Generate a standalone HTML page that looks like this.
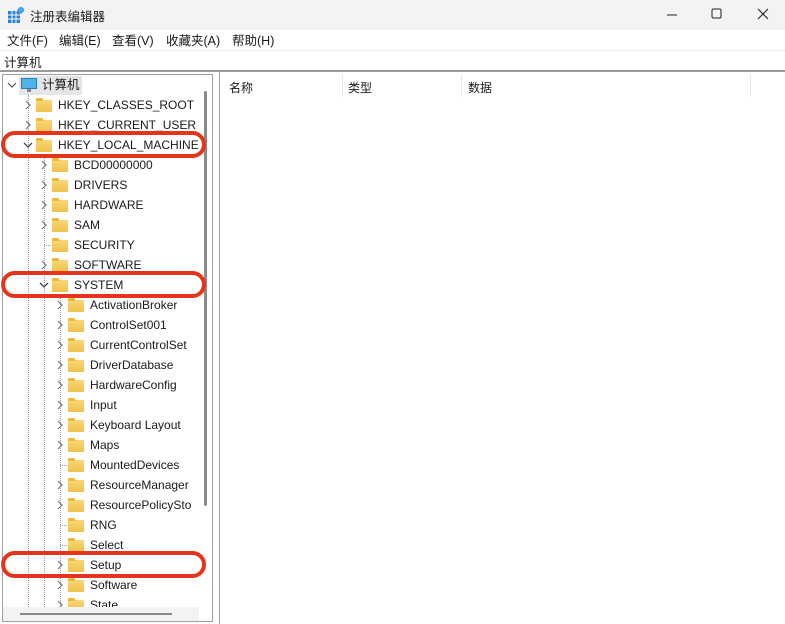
<!DOCTYPE html>
<html><head><meta charset="utf-8"><style>
*{margin:0;padding:0;box-sizing:border-box}
body{width:785px;height:624px;overflow:hidden;background:#fff;font-family:"Liberation Sans","Noto Sans CJK SC",sans-serif;font-size:12px;color:#1a1a1a;position:relative}
.a{position:absolute}
.title{left:0;top:0;width:785px;height:30px;background:#f3f3f3}
.menu{left:0;top:30px;width:785px;height:20px;background:#fff}
.menu span{position:absolute;top:0px;font-size:12.5px}
.addr{left:0;top:50px;width:785px;height:22px;background:#fff;border-top:1px solid #eee;border-bottom:2px solid #9a9a9a}
.tree{left:2px;top:74px;width:211px;height:548px;border:1px solid #a0a0a0;background:#fff;overflow:hidden}
.right{left:219px;top:72px;width:566px;height:552px;border-left:1px solid #a0a0a0;background:#fff}
.row{position:absolute;height:20px;line-height:20px;white-space:nowrap}
.fold{position:absolute;width:16px;height:12px;top:5px;background:linear-gradient(#f8d775,#f0c24a);border-radius:1px}
.fold:before{content:"";position:absolute;left:0;top:-2px;width:7px;height:3px;background:#e8b93e;border-radius:1px 1px 0 0}
.red{position:absolute;border:4px solid #e5341c;border-radius:14px}
</style></head><body>
<div class="a title">
<svg class="a" style="left:8px;top:7px" width="16" height="16"><rect x="0" y="4" width="12" height="12" fill="#2b7fd6"/><path d="M0 8h12M0 12h12M4 4v12M8 4v12" stroke="#fff" stroke-width="1"/><rect x="10" y="0" width="6" height="6" fill="#4aa3ef" transform="rotate(45 13 3)"/></svg>
<span class="a" style="left:30px;top:6px;font-size:12.5px">注册表编辑器</span>
<svg class="a" style="left:666px;top:9px" width="12" height="12"><path d="M1 6h10" stroke="#222"/></svg>
<svg class="a" style="left:711px;top:8px" width="12" height="12"><rect x="1" y="1" width="9" height="9" rx="1.5" fill="none" stroke="#222"/></svg>
<svg class="a" style="left:757px;top:8px" width="12" height="12"><path d="M1 1l10 10M11 1L1 11" stroke="#222"/></svg>
</div>
<div class="a menu"><span style="left:7px">文件(F)</span><span style="left:59px">编辑(E)</span><span style="left:112px">查看(V)</span><span style="left:166px">收藏夹(A)</span><span style="left:232px">帮助(H)</span></div>
<div class="a addr"><span class="a" style="left:4px;top:1px;font-size:12.5px">计算机</span></div>
<div class="a tree">
<div class="a" style="left:25px;top:20px;height:520px;border-left:1px dotted #999"></div>
<div class="a" style="left:41px;top:80px;height:460px;border-left:1px dotted #999"></div>
<div class="a" style="left:57px;top:220px;height:320px;border-left:1px dotted #999"></div>
<div class="row" style="left:0;top:0;width:200px">
 <svg class="a" style="left:4px;top:6px" width="10" height="8"><path d="M1 2l4 4 4-4" fill="none" stroke="#555" stroke-width="1.2"/></svg>
 <div class="a" style="left:16px;top:1px;width:63px;height:19px;background:#e5e5e5"></div>
 <svg class="a" style="left:18px;top:3px" width="16" height="15"><rect x="0.5" y="0.5" width="15" height="10" fill="#4fb3e8" stroke="#2a7fb8"/><rect x="6" y="11" width="4" height="3" fill="#888"/></svg>
 <span class="a" style="left:39px;font-size:12.5px">计算机</span>
</div>
<div id="rows"></div>
<div class="a" style="left:201px;top:16px;width:3px;height:415px;background:#8a8a8a;border-radius:2px"></div>
<div class="a" style="left:0;top:532px;width:196px;height:16px;background:#f3f3f3"></div>
<div class="a" style="left:17px;top:538px;width:152px;height:2px;background:#8a8a8a"></div>
</div>
<div class="a right">
<span class="a" style="left:9px;top:7px">名称</span>
<span class="a" style="left:128px;top:7px">类型</span>
<span class="a" style="left:248px;top:7px">数据</span>
<div class="a" style="left:122px;top:2px;height:23px;border-left:1px solid #e5e5e5"></div>
<div class="a" style="left:241px;top:2px;height:23px;border-left:1px solid #e5e5e5"></div>
<div class="a" style="left:530px;top:2px;height:23px;border-left:1px solid #e5e5e5"></div>
</div>
<div class="red" style="left:1px;top:131px;width:205px;height:27px"></div>
<div class="red" style="left:1px;top:271px;width:205px;height:27px"></div>
<div class="red" style="left:1px;top:551px;width:205px;height:27px"></div>
<script>
var R=[[1,1,"HKEY_CLASSES_ROOT"],[1,1,"HKEY_CURRENT_USER"],[1,2,"HKEY_LOCAL_MACHINE"],[2,1,"BCD00000000"],[2,1,"DRIVERS"],[2,1,"HARDWARE"],[2,1,"SAM"],[2,0,"SECURITY"],[2,1,"SOFTWARE"],[2,2,"SYSTEM"],[3,1,"ActivationBroker"],[3,1,"ControlSet001"],[3,1,"CurrentControlSet"],[3,1,"DriverDatabase"],[3,1,"HardwareConfig"],[3,1,"Input"],[3,1,"Keyboard Layout"],[3,1,"Maps"],[3,0,"MountedDevices"],[3,1,"ResourceManager"],[3,1,"ResourcePolicySto"],[3,0,"RNG"],[3,0,"Select"],[3,1,"Setup"],[3,1,"Software"],[3,1,"State"]];
var h="";R.forEach(function(r,i){var l=r[0],y=20+i*20,cx=9+16*l;var c;
if(r[1]==1)c='<svg class="a" style="left:'+(cx-4)+'px;top:5px" width="8" height="10"><path d="M2 1l4 4-4 4" fill="none" stroke="#777" stroke-width="1.2"/></svg>';
else if(r[1]==2)c='<svg class="a" style="left:'+(cx-5)+'px;top:6px" width="10" height="8"><path d="M1 2l4 4 4-4" fill="none" stroke="#444" stroke-width="1.3"/></svg>';
else c='<div class="a" style="left:'+(cx)+'px;top:10px;width:7px;border-top:1px dotted #999"></div>';
h+='<div class="row" style="left:0;top:'+y+'px;width:198px;overflow:hidden">'+c+'<div class="fold" style="left:'+(17+16*l)+'px"></div><span class="a" style="left:'+(39+16*l)+'px">'+r[2]+'</span></div>';});
document.getElementById("rows").innerHTML=h;
</script>
</body></html>
